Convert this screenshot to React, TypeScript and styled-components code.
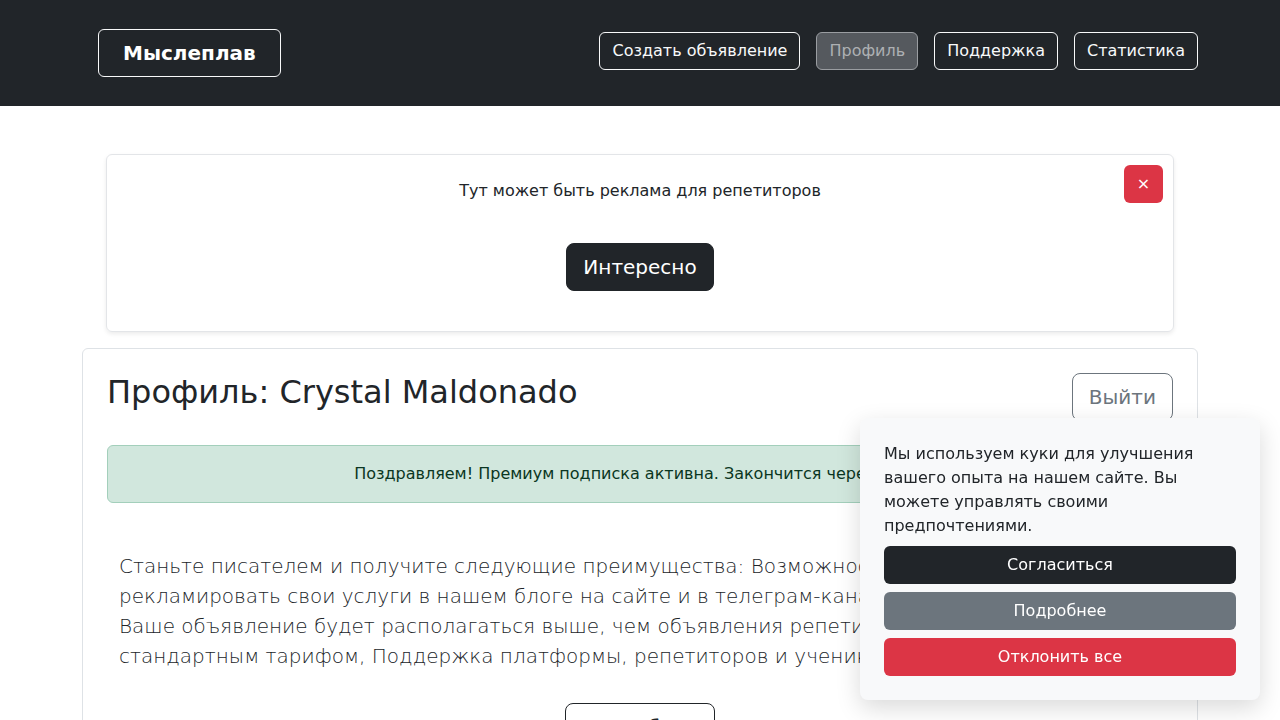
import React from "react";
import styled, { createGlobalStyle } from "styled-components";

const Global = createGlobalStyle`
  * { box-sizing: border-box; }
  html, body { margin: 0; padding: 0; }
  body {
    font-family: "DejaVu Sans", "Noto Sans", sans-serif;
    font-size: 16px;
    line-height: 1.5;
    color: #212529;
    background: #fff;
  }
`;

const Navbar = styled.header`
  background: #212529;
  height: 106px;
  display: flex;
  align-items: center;
`;

const NavInner = styled.div`
  width: 1116px;
  margin: 0 auto;
  display: flex;
  align-items: center;
  justify-content: space-between;
  padding-left: 16px;
`;

const Brand = styled.a`
  display: inline-flex;
  align-items: center;
  justify-content: center;
  height: 48px;
  padding: 0 24px;
  border: 1px solid #f8f9fa;
  border-radius: 6px;
  color: #fff;
  font-weight: 700;
  font-size: 20px;
  text-decoration: none;
`;

const NavList = styled.nav`
  display: flex;
  gap: 16px;
  margin-bottom: 4px;
`;

const NavButton = styled.button<{ $active?: boolean }>`
  font-family: inherit;
  font-size: 16px;
  line-height: 24px;
  height: 38px;
  padding: 6px 12px;
  border-radius: 6px;
  border: 1px solid ${(p) => (p.$active ? "#9a9da1" : "#f8f9fa")};
  background: ${(p) => (p.$active ? "#55595e" : "transparent")};
  color: ${(p) => (p.$active ? "#adb0b3" : "#f8f9fa")};
  cursor: pointer;
`;

const Container = styled.main`
  width: 1116px;
  margin: 48px auto 0;
`;

const AdCard = styled.section`
  position: relative;
  margin: 0 24px;
  border: 1px solid #e3e5e8;
  border-radius: 6px;
  box-shadow: 0 2px 4px rgba(0, 0, 0, 0.08);
  padding: 24px 24px 40px;
  display: flex;
  flex-direction: column;
  align-items: center;
`;

const AdText = styled.p`
  margin: 0 0 40px;
  font-size: 16px;
  line-height: 24px;
`;

const CloseButton = styled.button`
  position: absolute;
  top: 10px;
  right: 10px;
  width: 39px;
  height: 38px;
  border: none;
  border-radius: 6px;
  background: #dc3545;
  color: #fff;
  font-family: inherit;
  font-size: 16px;
  line-height: 1;
  padding: 0;
  cursor: pointer;
`;

const LargeButton = styled.button<{ $variant: "dark" | "outline-secondary" | "outline-dark" }>`
  font-family: inherit;
  font-size: 20px;
  line-height: 30px;
  height: 48px;
  padding: 8px 16px;
  border-radius: 8px;
  cursor: pointer;
  border: 1px solid
    ${(p) => (p.$variant === "outline-secondary" ? "#6c757d" : "#212529")};
  background: ${(p) => (p.$variant === "dark" ? "#212529" : "transparent")};
  color: ${(p) =>
    p.$variant === "dark" ? "#fff" : p.$variant === "outline-secondary" ? "#6c757d" : "#212529"};
`;

const ProfileCard = styled.section`
  margin-top: 16px;
  border: 1px solid #dee2e6;
  border-radius: 6px;
  padding: 24px 24px 40px;
`;

const ProfileHeader = styled.div`
  display: flex;
  justify-content: space-between;
  align-items: flex-start;
`;

const Title = styled.h2`
  margin: 0;
  font-size: 32px;
  font-weight: 500;
  line-height: 38px;
`;

const SuccessAlert = styled.div`
  margin-top: 24px;
  padding: 16px;
  background: #d1e7dd;
  border: 1px solid #a3cfbb;
  border-radius: 6px;
  color: #0a3622;
  text-align: center;
  font-size: 16px;
  line-height: 24px;
`;

const Lead = styled.p`
  margin: 48px 12px 32px;
  font-size: 20px;
  font-weight: 300;
  line-height: 30px;
  color: #212529;
`;

const Centered = styled.div`
  display: flex;
  justify-content: center;
`;

const CookieBox = styled.aside`
  position: fixed;
  right: 20px;
  bottom: 20px;
  width: 400px;
  padding: 24px;
  background: #f8f9fa;
  border-radius: 8px;
  box-shadow: 0 8px 24px rgba(0, 0, 0, 0.15);
  display: flex;
  flex-direction: column;
  gap: 8px;
`;

const CookieText = styled.p`
  margin: 0;
  font-size: 16px;
  line-height: 24px;
  color: #212529;
`;

const CookieButton = styled.button<{ $color: string }>`
  width: 100%;
  height: 38px;
  border: none;
  border-radius: 6px;
  background: ${(p) => p.$color};
  color: #fff;
  font-family: inherit;
  font-size: 16px;
  line-height: 24px;
  cursor: pointer;
`;

export default function App() {
  return (
    <>
      <Global />
      <Navbar>
        <NavInner>
          <Brand href="#">Мыслеплав</Brand>
          <NavList>
            <NavButton>Создать объявление</NavButton>
            <NavButton $active>Профиль</NavButton>
            <NavButton>Поддержка</NavButton>
            <NavButton>Статистика</NavButton>
          </NavList>
        </NavInner>
      </Navbar>
      <Container>
        <AdCard>
          <AdText>Тут может быть реклама для репетиторов</AdText>
          <LargeButton $variant="dark">Интересно</LargeButton>
          <CloseButton aria-label="Закрыть">×</CloseButton>
        </AdCard>
        <ProfileCard>
          <ProfileHeader>
            <Title>Профиль: Crystal Maldonado</Title>
            <LargeButton $variant="outline-secondary">Выйти</LargeButton>
          </ProfileHeader>
          <SuccessAlert>
            Поздравляем! Премиум подписка активна. Закончится через 3 дня
          </SuccessAlert>
          <Lead>
            Станьте писателем и получите следующие преимущества: Возможность
            <br />
            рекламировать свои услуги в нашем блоге на сайте и в телеграм-канале,
            <br />
            Ваше объявление будет располагаться выше, чем объявления репетиторов со
            <br />
            стандартным тарифом, Поддержка платформы, репетиторов и учеников.
          </Lead>
          <Centered>
            <LargeButton $variant="outline-dark">Подробнее</LargeButton>
          </Centered>
        </ProfileCard>
      </Container>
      <CookieBox>
        <CookieText>
          Мы используем куки для улучшения вашего опыта на нашем сайте. Вы можете
          управлять своими предпочтениями.
        </CookieText>
        <CookieButton $color="#212529">Согласиться</CookieButton>
        <CookieButton $color="#6c757d">Подробнее</CookieButton>
        <CookieButton $color="#dc3545">Отклонить все</CookieButton>
      </CookieBox>
    </>
  );
}
